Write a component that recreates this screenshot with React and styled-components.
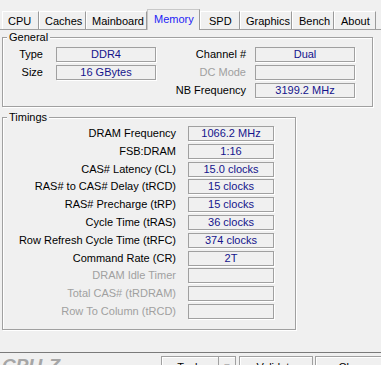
import React from "react";
import styled, { createGlobalStyle } from "styled-components";

const GlobalStyle = createGlobalStyle`
    html, body {
        margin: 0;
        padding: 0;
        background: #f0f0f0;
    }
    body {
        font-family: "Liberation Sans", Arial, sans-serif;
        font-size: 11px;
        color: #000;
    }
`

const Window = styled.div`
    width: 381px;
    height: 365px;
    overflow: hidden;
    background: #f0f0f0;
    display: flex;
    flex-direction: column;
`

const TabStrip = styled.div`
    height: 30px;
    box-sizing: border-box;
    display: flex;
    align-items: flex-end;
    padding-left: 2px;
    border-bottom: 1px solid #a0a0a0;
`

const Tab = styled.div`
    width: ${p => p.$w}px;
    box-sizing: border-box;
    height: ${p => (p.$active ? 21 : 18)}px;
    margin-bottom: ${p => (p.$active ? -1 : 0)}px;
    padding-left: ${p => p.$pad || 5}px;
    padding-top: 3px;
    line-height: 13px;
    white-space: nowrap;
    color: ${p => (p.$active ? "#2323f5" : "#000")};
    background: #f0f0f0;
    border-top: 1px solid ${p => (p.$active ? "#c8c8c8" : "#fff")};
    border-left: 1px solid ${p => (p.$active ? "#c8c8c8" : "#fff")};
    border-right: 1px solid #9a9a9a;
    position: relative;
    z-index: ${p => (p.$active ? 1 : 0)};
`

const Panel = styled.div`
    padding: 7px 0 0 2px;
    display: flex;
    flex-direction: column;
    gap: 10px;
`

const Group = styled.div`
    position: relative;
    width: ${p => p.$w}px;
    box-sizing: border-box;
    border: 1px solid #a0a0a0;
    box-shadow: inset 1px 1px 0 #fff, 1px 1px 0 #fff;
    padding: ${p => p.$pad};
`

const Legend = styled.span`
    position: absolute;
    top: -8px;
    left: 4px;
    padding: 0 2px;
    line-height: 14px;
    background: #f0f0f0;
`

const GeneralGrid = styled.div`
    display: grid;
    grid-template-columns: 40px 113px 99px 100px;
    row-gap: 3px;
    grid-auto-rows: 15px;
`

const TimingGrid = styled.div`
    display: grid;
    grid-template-columns: 173px 86px;
    column-gap: 12px;
    row-gap: 2.8px;
    grid-auto-rows: 15px;
`

const Label = styled.div`
    text-align: right;
    line-height: 15px;
    white-space: nowrap;
    color: ${p => (p.$off ? "#a0a0a0" : "#000")};
    margin-right: ${p => p.$gap || 0}px;
`

const Value = styled.div`
    box-sizing: border-box;
    height: 15px;
    border: 1px solid #a0a0a0;
    box-shadow: 1px 1px 0 #fff;
    text-align: center;
    line-height: 13px;
    color: #14148c;
    white-space: nowrap;
    margin-left: ${p => p.$gap || 0}px;
`

const Footer = styled.div`
    margin-top: auto;
    flex: none;
    height: 9px;
    border-top: 1px solid #7a7a7a;
    display: flex;
    padding: 3px 0 0 2px;
`

const Logo = styled.div`
    width: 159px;
    flex: none;
    font-size: 19px;
    font-weight: bold;
    font-style: italic;
    line-height: 19px;
    color: #a6a6a6;
`

const Button = styled.div`
    flex: none;
    width: ${p => p.$w}px;
    margin-left: ${p => p.$ml || 0}px;
    height: 23px;
    box-sizing: border-box;
    border: 1px solid #a0a0a0;
    box-shadow: inset 1px 1px 0 #fff;
    display: flex;
    line-height: 13px;
    padding-top: 4px;
    justify-content: center;
`

const SplitLabel = styled.div`
    flex: 1;
    text-align: center;
    border-right: 1px solid #a0a0a0;
    margin-top: -4px;
    padding-top: 4px;
`

const Arrow = styled.div`
    width: 16px;
    text-align: center;
    font-size: 9px;
`

const tabs = [
    { name: "CPU", w: 37 },
    { name: "Caches", w: 47 },
    { name: "Mainboard", w: 61 },
    { name: "Memory", w: 53, active: true, pad: 6 },
    { name: "SPD", w: 40, pad: 8 },
    { name: "Graphics", w: 52 },
    { name: "Bench", w: 42, pad: 6 },
    { name: "About", w: 42, pad: 6 },
]

const timings = [
    ["DRAM Frequency", "1066.2 MHz"],
    ["FSB:DRAM", "1:16"],
    ["CAS# Latency (CL)", "15.0 clocks"],
    ["RAS# to CAS# Delay (tRCD)", "15 clocks"],
    ["RAS# Precharge (tRP)", "15 clocks"],
    ["Cycle Time (tRAS)", "36 clocks"],
    ["Row Refresh Cycle Time (tRFC)", "374 clocks"],
    ["Command Rate (CR)", "2T"],
    ["DRAM Idle Timer", "", true],
    ["Total CAS# (tRDRAM)", "", true],
    ["Row To Column (tRCD)", "", true],
]

export default function App() {
    return (
        <>
            <GlobalStyle />
            <Window>
                <TabStrip>
                    {tabs.map(t => (
                        <Tab key={t.name} $w={t.w} $active={t.active} $pad={t.pad}>{t.name}</Tab>
                    ))}
                </TabStrip>
                <Panel>
                    <Group $w={371} $pad="9px 0 8px 0">
                        <Legend>General</Legend>
                        <GeneralGrid>
                            <Label>Type</Label>
                            <Value $gap={13}>DDR4</Value>
                            <Label $gap={9}>Channel #</Label>
                            <Value>Dual</Value>
                            <Label>Size</Label>
                            <Value $gap={13}>16 GBytes</Value>
                            <Label $gap={9} $off>DC Mode</Label>
                            <Value></Value>
                            <div />
                            <div />
                            <Label $gap={9}>NB Frequency</Label>
                            <Value>3199.2 MHz</Value>
                        </GeneralGrid>
                    </Group>
                    <Group $w={294} $pad="8px 0 10px 0">
                        <Legend>Timings</Legend>
                        <TimingGrid>
                            {timings.map(([label, value, off]) => (
                                <React.Fragment key={label}>
                                    <Label $off={off}>{label}</Label>
                                    <Value>{value}</Value>
                                </React.Fragment>
                            ))}
                        </TimingGrid>
                    </Group>
                </Panel>
                <Footer>
                    <Logo>CPU-Z</Logo>
                    <Button $w={75}>
                        <SplitLabel>Tools</SplitLabel>
                        <Arrow>▼</Arrow>
                    </Button>
                    <Button $w={74} $ml={3}>Validate</Button>
                    <Button $w={75} $ml={2}>Close</Button>
                </Footer>
            </Window>
        </>
    );
}
